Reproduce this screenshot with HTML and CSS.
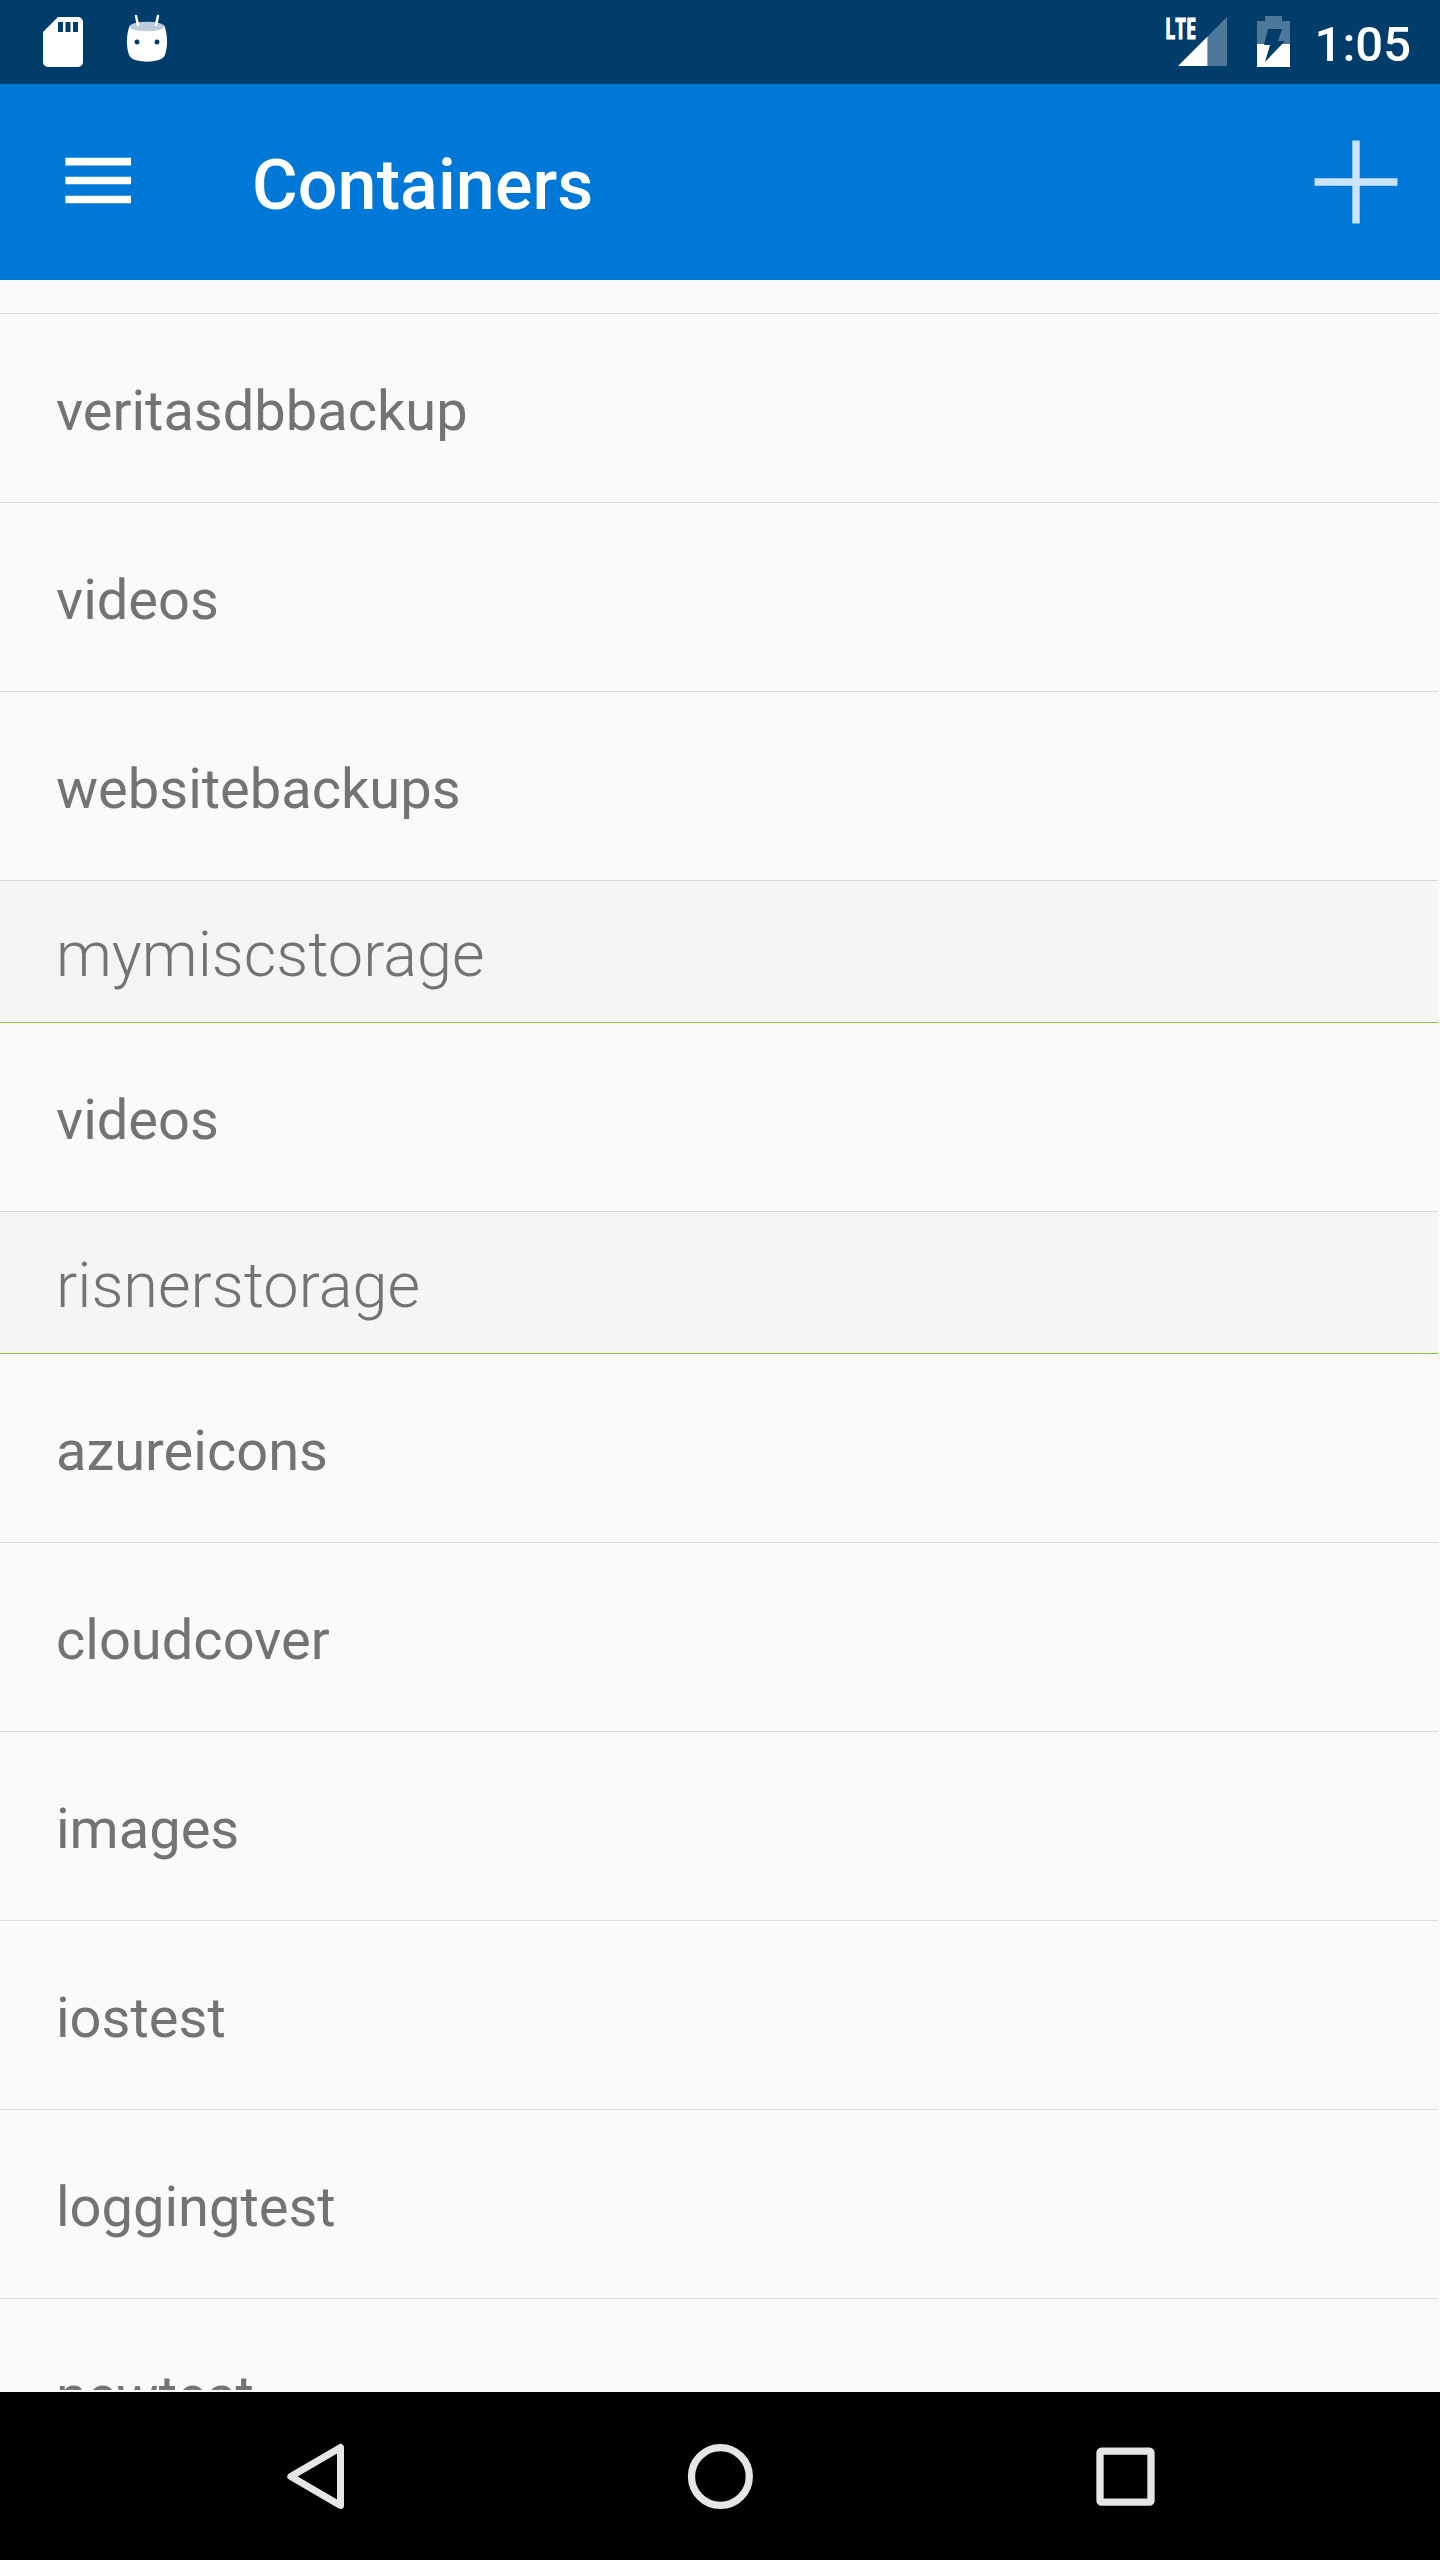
FILE: index.html
```html
<!DOCTYPE html>
<html lang="en">
<head>
<meta charset="utf-8">
<title>Containers</title>
<link rel="stylesheet" href="styles.css">
</head>
<body>
<div class="screen">
  <div class="status-bar">
    <div class="status-left">
      <svg class="icon-sd" width="40" height="50" viewBox="0 0 40 50"><path fill="#fff" fill-rule="evenodd" d="M15 0H35a5 5 0 0 1 5 5V45a5 5 0 0 1-5 5H5a5 5 0 0 1-5-5V15ZM15 5V15H20V5ZM22.500 5V15H27.500V5ZM30 5V15H35V5Z"/></svg>
      <svg class="icon-droid" width="42" height="50" viewBox="0 0 42 50"><path fill="#fff" fill-rule="evenodd" d="M4 11C10 17 32 17 38 11C42 20 42 34 38.500 42C34 49.500 8 49.500 3.500 42C0 34 0 20 4 11ZM11 25.500a2.500 2.500 0 1 0 .01 0ZM31 25.500a2.500 2.500 0 1 0 .01 0Z"/><ellipse cx="21" cy="12.500" rx="17" ry="4.800" fill="#bccbd8"/><path d="M10 2L12 11M32 2L30 11" stroke="#fff" stroke-width="2.500" stroke-linecap="round"/></svg>
    </div>
    <div class="status-right">
      <div class="signal">
        <span class="lte">LTE</span>
        <svg width="49" height="49" viewBox="0 0 49 49"><path fill="#4d7899" d="M49 0V49H29.500V19.500Z"/><path fill="#fff" d="M29.500 19.500V49H0Z"/></svg>
      </div>
      <svg class="icon-battery" width="33" height="51" viewBox="0 0 33 51"><path fill="#4d7899" d="M8 0H25V5H33V28H0V5H8Z"/><path fill="#fff" d="M0 28H33V51H0Z"/><path fill="#003d6b" d="M11 13H25L21 25H28L8 46L13 29H7Z"/></svg>
      <span class="clock">1:05</span>
    </div>
  </div>
  <header class="app-bar">
    <svg class="icon-menu" width="66" height="48" viewBox="0 0 66 48"><path fill="#fff" d="M.4.800H66V8.400H.4ZM.4 19.700H66V27.300H.4ZM.4 38.700H66V46.300H.4Z"/></svg>
    <h1 class="title">Containers</h1>
    <svg class="icon-add" width="84" height="84" viewBox="0 0 84 84"><path fill="#cce4f7" d="M38.300.500H45.700V38.300H83.500V45.700H45.700V83.500H38.300V45.700H.5V38.300H38.300Z"/></svg>
  </header>
  <main class="list">
    <div class="row row-partial"></div>
    <div class="row">veritasdbbackup</div>
    <div class="row">videos</div>
    <div class="row">websitebackups</div>
    <div class="group">mymiscstorage</div>
    <div class="row">videos</div>
    <div class="group">risnerstorage</div>
    <div class="row">azureicons</div>
    <div class="row">cloudcover</div>
    <div class="row">images</div>
    <div class="row">iostest</div>
    <div class="row">loggingtest</div>
    <div class="row">newtest</div>
  </main>
  <nav class="nav-bar">
    <svg width="64" height="68" viewBox="0 0 64 68"><path d="M55.500 5.500V63.500L5.800 34.500Z" fill="none" stroke="#e6e6e6" stroke-width="7" stroke-linejoin="round"/></svg>
    <svg width="68" height="68" viewBox="0 0 68 68"><circle cx="34.400" cy="34.500" r="28.900" fill="none" stroke="#e6e6e6" stroke-width="7.300"/></svg>
    <svg width="68" height="68" viewBox="0 0 68 68"><rect x="9" y="9.200" width="51" height="51" rx="1.500" fill="none" stroke="#e6e6e6" stroke-width="7.300"/></svg>
  </nav>
</div>
</body>
</html>
```
FILE: styles.css
```css
body {
  margin: 0;
  font-family: Roboto, "Liberation Sans", sans-serif;
}

.screen {
  display: flex;
  flex-direction: column;
  width: 1440px;
  height: 2560px;
  overflow: hidden;
  background: #fafafa;
}

svg {
  display: block;
  flex: none;
}

.status-bar {
  display: flex;
  justify-content: space-between;
  height: 84px;
  flex: none;
  color: #fff;
  background: #003d6b;
}

.status-left {
  display: flex;
  gap: 43px;
  padding: 17px 0 0 43px;
}

.icon-droid {
  margin-top: -3px;
}

.status-right {
  display: flex;
  padding: 16px 29px 0 0;
}

.signal {
  display: flex;
  padding-top: 1px;
  margin-right: 30px;
}

.lte {
  width: 13px;
  font: 700 29px/21px "Open Sans", sans-serif;
  -webkit-text-stroke: 1px #fff;
  transform: scaleX(0.63);
  transform-origin: 0 0;
}

.clock {
  margin-left: 25px;
  font-size: 49px;
  font-weight: 500;
  line-height: 57px;
}

.app-bar {
  display: flex;
  align-items: flex-start;
  height: 196px;
  flex: none;
  color: #fff;
  background: #0078d7;
}

.icon-menu {
  margin: 73px 0 0 65px;
}

.title {
  flex: 1;
  margin: 60px 0 0 121px;
  font-size: 70px;
  font-weight: 500;
  letter-spacing: 0.1px;
  line-height: 82px;
}

.icon-add {
  margin: 56px 42px 0 0;
}

.list {
  flex: none;
  width: 1438px;
  height: 2110px;
  margin-bottom: 2px;
  overflow: hidden;
  color: #737373;
}

.row {
  box-sizing: border-box;
  height: 189px;
  padding: 64px 56px 0;
  border-bottom: 1px solid #dadada;
  font-size: 56px;
  line-height: 66px;
}

.row-partial {
  height: 34px;
  padding-top: 0;
}

.group {
  box-sizing: border-box;
  height: 142px;
  padding: 37px 56px 0;
  border-bottom: 1px solid #86c440;
  background: #f5f5f5;
  font-size: 63px;
  font-weight: 300;
  line-height: 74px;
}

.nav-bar {
  display: flex;
  align-items: center;
  height: 168px;
  flex: none;
  gap: 337px;
  padding-left: 285px;
  background: #000;
}
```
